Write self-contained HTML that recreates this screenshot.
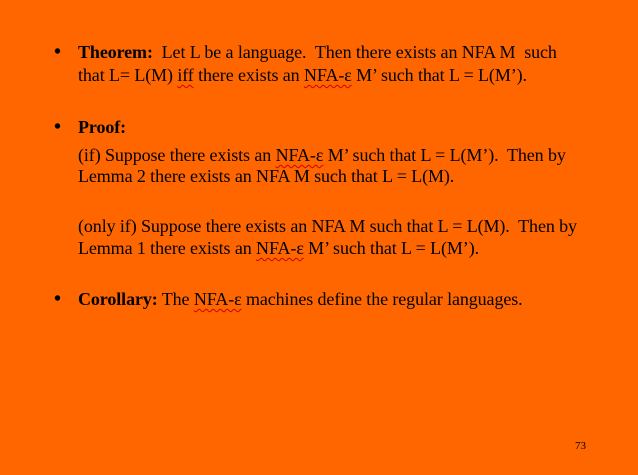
<!DOCTYPE html>
<html><head><style>
html,body{margin:0;padding:0}
body{width:638px;height:475px;background:#FF6600;position:relative;overflow:hidden;font-family:"Liberation Serif","Times New Roman",serif;font-size:18px;color:#000}
.l{position:absolute;left:78px;line-height:20px;white-space:nowrap;font-family:"Liberation Serif",serif;letter-spacing:-0.1px}
.b{position:absolute;left:54px;line-height:20px;font-size:20px;font-weight:bold}
.s{text-decoration:underline wavy #d00000;text-decoration-thickness:1px;text-underline-offset:3px}
.n{position:absolute;left:575px;top:440px;font-size:11px}
</style></head><body>
<div class="b" style="top:42px">•</div>
<div class="l" style="top:42px"><b>Theorem:</b>&nbsp; Let L be a language.&nbsp; Then there exists an NFA M &nbsp;such</div>
<div class="l" style="top:65px">that L= L(M) <span class="s">iff</span> there exists an <span class="s">NFA-ε</span> M’ such that L = L(M’).</div>
<div class="b" style="top:117px">•</div>
<div class="l" style="top:117px"><b>Proof:</b></div>
<div class="l" style="top:145px">(if) Suppose there exists an <span class="s">NFA-ε</span> M’ such that L = L(M’).&nbsp; Then by</div>
<div class="l" style="top:166px">Lemma 2 there exists an NFA M such that L = L(M).</div>
<div class="l" style="top:216px">(only if) Suppose there exists an NFA M such that L = L(M).&nbsp; Then by</div>
<div class="l" style="top:238px">Lemma 1 there exists an <span class="s">NFA-ε</span> M’ such that L = L(M’).</div>
<div class="b" style="top:289px">•</div>
<div class="l" style="top:289px"><b>Corollary:</b> The <span class="s">NFA-ε</span> machines define the regular languages.</div>
<div class="n">73</div>
</body></html>
